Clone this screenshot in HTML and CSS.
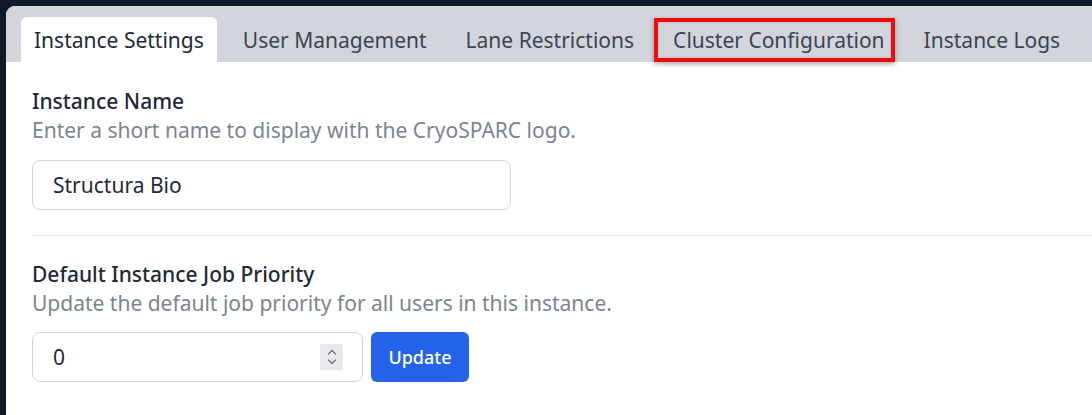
FILE: index.html
```html
<!DOCTYPE html>
<html lang="en">
<head>
<meta charset="utf-8">
<title>Instance Settings</title>
<link rel="stylesheet" href="styles.css">
</head>
<body>
<div class="panel">
  <nav class="tabs">
    <div class="tab active">Instance Settings</div>
    <div class="tab">User Management</div>
    <div class="tab">Lane Restrictions</div>
    <div class="tab highlighted">Cluster Configuration</div>
    <div class="tab">Instance Logs</div>
  </nav>
  <main class="content">
    <section class="field">
      <div class="label">Instance Name</div>
      <div class="hint">Enter a short name to display with the CryoSPARC logo.</div>
      <div class="input text-input">Structura Bio</div>
    </section>
    <hr class="divider">
    <section class="field">
      <div class="label">Default Instance Job Priority</div>
      <div class="hint">Update the default job priority for all users in this instance.</div>
      <div class="row">
        <div class="input number-input">
          <span>0</span>
          <span class="spinner">
            <svg width="12" height="20" viewBox="0 0 12 20"><path d="M2.5 7 L6 3.5 L9.5 7" fill="none" stroke="#6b7280" stroke-width="1.3" stroke-linecap="round" stroke-linejoin="round"/><path d="M2.5 13 L6 16.5 L9.5 13" fill="none" stroke="#6b7280" stroke-width="1.3" stroke-linecap="round" stroke-linejoin="round"/></svg>
          </span>
        </div>
        <button class="btn">Update</button>
      </div>
    </section>
  </main>
</div>
</body>
</html>
```
FILE: styles.css
```css
html, body {
  margin: 0;
  padding: 0;
}
body {
  background: #111827;
  font-family: "Noto Sans", "Open Sans", sans-serif;
  height: 415px;
  overflow: hidden;
  padding: 6px 0 0 6px;
  box-sizing: border-box;
}
.panel {
  background: #ffffff;
  border-top-left-radius: 9px;
  height: 409px;
  overflow: hidden;
}
.tabs {
  display: flex;
  gap: 13px;
  background: #d2d5db;
  padding: 11px 0 0 15px;
  height: 56px;
  box-sizing: border-box;
}
.tab {
  position: relative;
  padding: 2px 13px 0;
  height: 45px;
  line-height: 43px;
  font-size: 21px;
  color: #3b4452;
  border-radius: 6px 6px 0 0;
  box-sizing: border-box;
  white-space: nowrap;
}
.tab.active {
  background: #ffffff;
  color: #1f2937;
}
.tab.highlighted::after {
  content: "";
  position: absolute;
  left: -6px;
  right: 3px;
  top: 1px;
  bottom: 0;
  border: 4px solid #ee0d0d;
  box-shadow: 0 2px 5px rgba(0,0,0,0.35), inset 0 0 3px rgba(0,0,0,0.2);
}
.content {
  padding: 25px 0 0 26px;
}
.label {
  font-size: 21px;
  font-weight: 500;
  color: #1f2937;
  line-height: 29px;
}
.hint {
  font-size: 21px;
  color: #7b8494;
  line-height: 29px;
}
.input {
  border: 1px solid #d1d5db;
  border-radius: 8px;
  height: 50px;
  box-sizing: border-box;
  font-size: 21px;
  color: #1f2937;
  display: flex;
  align-items: center;
  padding: 0 20px;
}
.text-input {
  width: 479px;
  margin-top: 15px;
}
.divider {
  border: none;
  border-top: 1px solid #e5e7eb;
  margin: 25px 0 0 0;
}
.field + .divider + .field {
  margin-top: 24px;
}
.row {
  display: flex;
  gap: 8px;
  margin-top: 14px;
}
.number-input {
  width: 331px;
  justify-content: space-between;
  padding-right: 19px;
}
.spinner {
  width: 23px;
  height: 26px;
  background: #e9e9ed;
  display: flex;
  align-items: center;
  justify-content: center;
}
.btn {
  background: #2563eb;
  color: #ffffff;
  border: none;
  border-radius: 6px;
  height: 50px;
  width: 98px;
  font-family: inherit;
  font-size: 18px;
  font-weight: 500;
  padding: 0;
}
```
